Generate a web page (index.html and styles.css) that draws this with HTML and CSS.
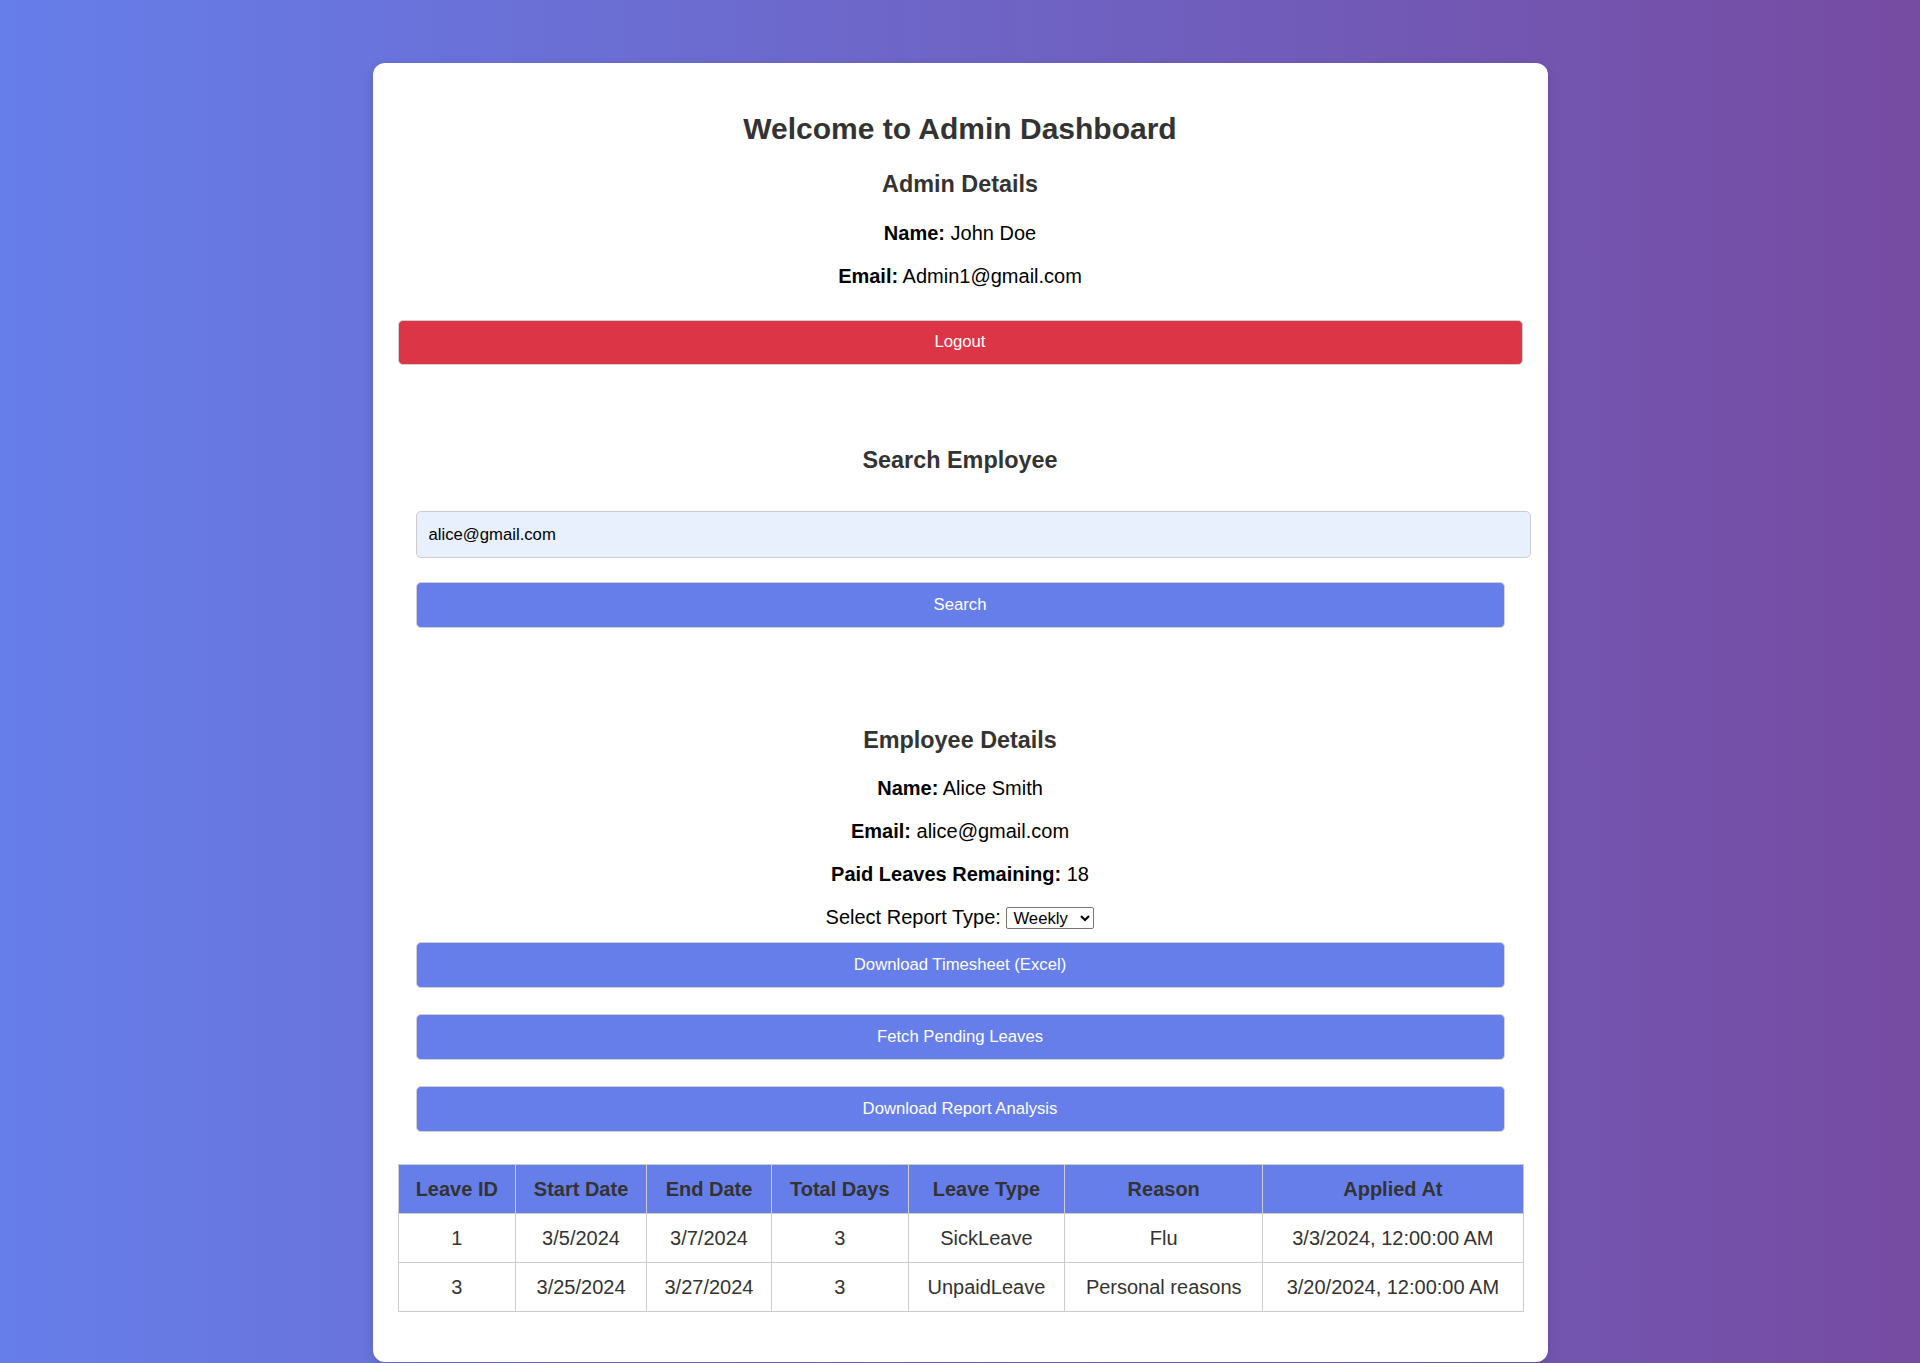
FILE: index.html
```html
<!DOCTYPE html>
<html lang="en">
<head>
<meta charset="utf-8">
<title>Admin Dashboard</title>
<link rel="stylesheet" href="styles.css">
</head>
<body>
<div class="card">
  <h1 class="title">Welcome to Admin Dashboard</h1>
  <h2 class="sub first">Admin Details</h2>
  <p class="info"><strong>Name:</strong> John Doe</p>
  <p class="info"><strong>Email:</strong> Admin1@gmail.com</p>
  <button class="btn btn-danger logout">Logout</button>

  <section class="section search">
    <h2 class="sub">Search Employee</h2>
    <input class="field" type="text" value="alice@gmail.com">
    <button class="btn btn-primary search-btn">Search</button>
  </section>

  <section class="section employee">
    <h2 class="sub emp-title">Employee Details</h2>
    <p class="info"><strong>Name:</strong> Alice Smith</p>
    <p class="info"><strong>Email:</strong> alice@gmail.com</p>
    <p class="info"><strong>Paid Leaves Remaining:</strong> 18</p>
    <p class="info report-row">Select Report Type: <select class="report-select"><option>Weekly</option><option>Monthly</option></select></p>
    <div class="actions">
      <button class="btn btn-primary">Download Timesheet (Excel)</button>
      <button class="btn btn-primary">Fetch Pending Leaves</button>
      <button class="btn btn-primary">Download Report Analysis</button>
    </div>
  </section>

  <table class="leaves">
    <thead>
      <tr>
        <th>Leave ID</th>
        <th>Start Date</th>
        <th>End Date</th>
        <th>Total Days</th>
        <th>Leave Type</th>
        <th>Reason</th>
        <th>Applied At</th>
      </tr>
    </thead>
    <tbody>
      <tr>
        <td>1</td>
        <td>3/5/2024</td>
        <td>3/7/2024</td>
        <td>3</td>
        <td>SickLeave</td>
        <td>Flu</td>
        <td>3/3/2024, 12:00:00 AM</td>
      </tr>
      <tr>
        <td>3</td>
        <td>3/25/2024</td>
        <td>3/27/2024</td>
        <td>3</td>
        <td>UnpaidLeave</td>
        <td>Personal reasons</td>
        <td>3/20/2024, 12:00:00 AM</td>
      </tr>
    </tbody>
  </table>
</div>
</body>
</html>
```
FILE: styles.css
```css
* {
  box-sizing: content-box;
}

html, body {
  margin: 0;
  padding: 0;
}

body {
  min-height: 100vh;
  background: linear-gradient(to right, #667eea, #764ba2);
  font-family: "Liberation Sans", Arial, Helvetica, sans-serif;
  color: #333;
  padding-top: 63px;
  padding-bottom: 1px;
  box-sizing: border-box;
}

.card {
  width: 1125px;
  margin: 0 auto;
  padding: 25px 25px 25px;
  background: #fff;
  border-radius: 12px;
  box-shadow: 0 4px 12px rgba(0, 0, 0, 0.12);
  text-align: center;
}

.title {
  font-size: 30px;
  font-weight: bold;
  color: #333;
  margin: 24px 0 0;
  line-height: 34px;
}

.sub {
  font-size: 23.4px;
  font-weight: bold;
  color: #333;
  margin: 0;
  line-height: 27px;
}

.sub.first {
  margin-top: 25px;
  margin-bottom: 24px;
}

.info {
  font-size: 20px;
  color: #000;
  margin: 0 0 20px;
  line-height: 23px;
}

.btn {
  display: block;
  width: 100%;
  padding: 12px 0;
  font-family: "Liberation Sans", Arial, Helvetica, sans-serif;
  font-size: 16.7px;
  line-height: 20px;
  color: #fff;
  border: 1px solid #cfcfd4;
  border-radius: 5px;
  cursor: pointer;
}

.btn-danger {
  background: #dc3545;
  width: 1123px;
}

.btn-primary {
  background: #667eea;
}

.logout {
  margin-top: 32px;
  height: 20px;
  padding: 11px 0 12px;
}

.section {
  padding: 0 18px;
}

.search {
  margin-top: 82px;
}

.field {
  display: block;
  width: 100%;
  margin: 37px 0 0;
  padding: 12px 12px;
  font-family: "Liberation Sans", Arial, Helvetica, sans-serif;
  font-size: 16.7px;
  line-height: 21px;
  color: #000;
  background: #e8f0fe;
  border: 1px solid #ccc;
  border-radius: 5px;
  text-align: left;
}

.search-btn {
  margin-top: 24px;
  width: 1087px;
}

.employee {
  margin-top: 99px;
}

.emp-title {
  margin-bottom: 23px;
}

.report-row {
  margin-top: -2px;
  margin-bottom: 0;
  line-height: 26px;
}

.report-select {
  box-sizing: border-box;
  width: 88px;
  font-family: "Liberation Sans", Arial, Helvetica, sans-serif;
  font-size: 16.7px;
  height: 22px;
  padding: 0 2px;
  color: #000;
  border: 1px solid #767676;
  border-radius: 2px;
  background: #fff;
  vertical-align: baseline;
}

.actions {
  display: flex;
  flex-direction: column;
  gap: 26px;
  margin-top: 12px;
}

.actions .btn {
  width: 1087px;
}

.leaves {
  width: 100%;
  margin: 32px 0 25px;
  border-collapse: collapse;
  font-size: 20px;
  color: #333;
}

.leaves th,
.leaves td {
  border: 1px solid #ccc;
  padding: 12px 12px;
  line-height: 24px;
  text-align: center;
}

.leaves th {
  background: #667eea;
  color: #333;
  font-weight: bold;
}
```
